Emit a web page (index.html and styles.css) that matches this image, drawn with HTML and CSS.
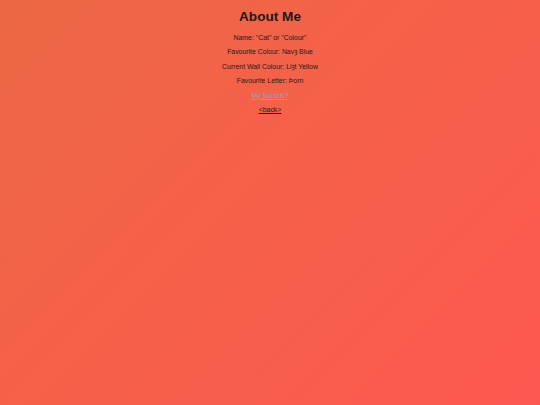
FILE: index.html
```html
<!DOCTYPE html>
<html>
<head>
<meta charset="utf-8">
<link rel="stylesheet" href="styles.css">
</head>
<body>
<main class="page">
  <h1 class="title">About Me</h1>
  <p class="line">Name: "Cat" or "Colour"</p>
  <p class="line">Favourite Colour: Navȝ Blue</p>
  <p class="line">Current Wall Colour: Liȝt Yellow</p>
  <p class="line">Favourite Letter: Þorn</p>
  <p class="line"><a class="link social" href="#">My Socials?</a></p>
  <p class="line"><a class="link back" href="#">&lt;back&gt;</a></p>
</main>
</body>
</html>
```
FILE: styles.css
```css
html, body {
  margin: 0;
  padding: 0;
  height: 100%;
}
body {
  background: linear-gradient(135deg, #ec6844 0%, #f6604a 50%, #fd5850 100%);
  font-family: "Liberation Sans", Arial, sans-serif;
  color: #1a1a1a;
}
.page {
  display: flex;
  flex-direction: column;
  align-items: center;
  padding-top: 9px;
}
.title {
  font-size: 13.6px;
  font-weight: bold;
  margin: 0 0 7.5px 0;
  line-height: 16px;
}
.line {
  font-size: 6.9px;
  line-height: 9px;
  margin: 0 0 5.5px 0;
}
.link {
  color: #1a1a1a;
}
.social {
  color: #86a4cc;
}
```
